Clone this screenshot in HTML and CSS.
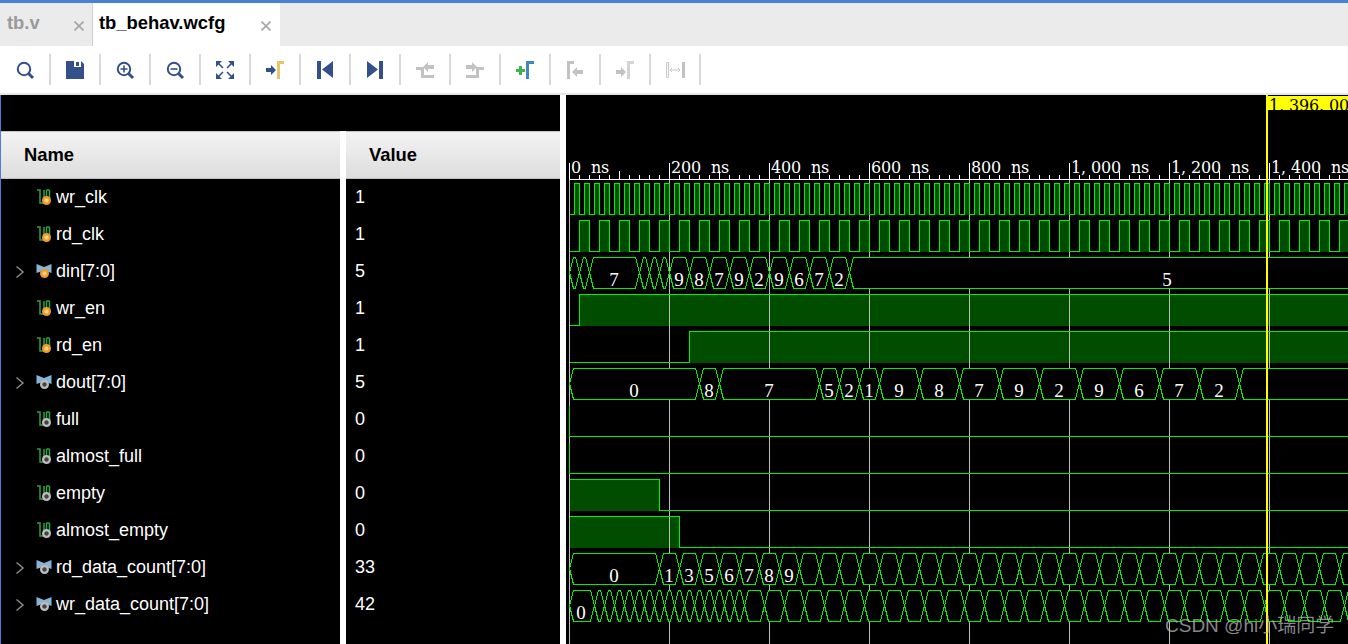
FILE: index.html
```html
<!DOCTYPE html>
<html lang="en">
<head>
<meta charset="utf-8">
<title>tb_behav.wcfg</title>
<link rel="stylesheet" href="styles.css">
</head>
<body>
<svg class="defs" width="0" height="0" aria-hidden="true">
  <defs>
    <symbol id="sig" viewBox="0 0 16 16">
      <path d="M1 1H4V14H8V1M10.5 1V11M13.5 1V11M10.5 1H13.5" fill="none" stroke="#2fa044" stroke-width="1.5"/>
    </symbol>
    <symbol id="bus" viewBox="0 0 16 16">
      <path d="M0.5 1 L8 4 L15.5 1 V10 L8 7.5 L0.5 10Z" fill="#86b3d6"/>
    </symbol>
  </defs>
</svg>

<header class="tabs">
  <div class="tab tab-off">
    <span class="tab-label">tb.v</span>
    <svg class="x" viewBox="0 0 10 10"><path d="M0.5 0.5L9.5 9.5M9.5 0.5L0.5 9.5"/></svg>
  </div>
  <div class="tab tab-on">
    <span class="tab-label">tb_behav.wcfg</span>
    <svg class="x" viewBox="0 0 10 10"><path d="M0.5 0.5L9.5 9.5M9.5 0.5L0.5 9.5"/></svg>
  </div>
</header>

<nav class="toolbar">
  <div class="tool"><svg class="ico" viewBox="0 0 20 20"><circle class="ring" cx="9" cy="9" r="6.2"/><path class="handle" d="M13.5 13.5L18 18"/></svg></div>
  <div class="tool"><svg class="ico" viewBox="0 0 20 20"><path class="navy" d="M1 1H16L19 4V19H1Z"/><rect x="9" y="1" width="7" height="6" fill="#fff"/><rect x="11" y="2" width="3" height="4" class="navy"/></svg></div>
  <div class="tool"><svg class="ico" viewBox="0 0 20 20"><circle class="ring" cx="9" cy="9" r="6.2"/><path class="handle" d="M13.5 13.5L18 18"/><path class="thin" d="M5.5 9H12.5M9 5.5V12.5"/></svg></div>
  <div class="tool"><svg class="ico" viewBox="0 0 20 20"><circle class="ring" cx="9" cy="9" r="6.2"/><path class="handle" d="M13.5 13.5L18 18"/><path class="thin" d="M5.5 9H12.5"/></svg></div>
  <div class="tool"><svg class="ico" viewBox="0 0 20 20"><path class="navy" d="M1 1H7L1 7ZM19 1V7L13 1ZM1 19V13L7 19ZM19 19H13L19 13Z"/><path class="thin" d="M3 3L8 8M17 3L12 8M3 17L8 12M17 17L12 12"/></svg></div>
  <div class="tool"><svg class="ico" viewBox="0 0 20 20"><path class="navy" d="M1 8H6V5L11 10L6 15V12H1Z"/><path fill="#e3c76b" d="M12 1H19V4H15V19H12Z"/></svg></div>
  <div class="tool"><svg class="ico" viewBox="0 0 20 20"><rect class="navy" x="2" y="1" width="4" height="18"/><path class="navy" d="M18 1V18L7 9.5Z"/></svg></div>
  <div class="tool"><svg class="ico" viewBox="0 0 20 20"><path class="navy" d="M2 1V18L13 9.5Z"/><rect class="navy" x="14" y="1" width="4" height="18"/></svg></div>
  <div class="tool"><svg class="ico" viewBox="0 0 20 20"><path class="mute" d="M1 7H9V15H19V18H6V10H1Z"/><path class="mute" d="M8 7L13 2V5H19V9H13V12Z"/></svg></div>
  <div class="tool"><svg class="ico" viewBox="0 0 20 20"><path class="mute" d="M1 5H7V2L12 7L7 12V9H1Z"/><path class="mute" d="M19 7V10H14V18H1V15H11V7Z"/></svg></div>
  <div class="tool"><svg class="ico" viewBox="0 0 20 20"><path fill="#3cb54a" d="M4 6H7V9H10V12H7V15H4V12H1V9H4Z"/><path fill="#3f87bd" d="M11 1H19V4H14V19H11Z"/></svg></div>
  <div class="tool"><svg class="ico" viewBox="0 0 20 20"><path class="mute" d="M2 1H9V4H5V19H2Z"/><path class="mute" d="M7 12L12 7V10H18V14H12V17Z"/></svg></div>
  <div class="tool"><svg class="ico" viewBox="0 0 20 20"><path class="mute" d="M1 10H6V7L11 12L6 17V14H1Z"/><path class="mute-lt" d="M12 1H19V4H15V19H12Z"/></svg></div>
  <div class="tool"><svg class="ico" viewBox="0 0 20 20"><path fill="none" stroke="#c9c9c9" stroke-width="1" d="M1.5 2.5H3.5V17.5H1.5Z"/><rect class="mute" x="17" y="2" width="3" height="16"/><path d="M5 10H15M7 8L5 10L7 12M13 8L15 10L13 12" fill="none" stroke="#c9c9c9" stroke-width="1"/></svg></div>
</nav>

<div class="strip"></div>

<main class="main">
  <section class="signals">
    <div class="signals-top"></div>
    <div class="cols">
      <div class="col-name">
        <div class="head">Name</div>
        <div class="row"><span class="chev-none"></span><span class="sig"><svg><use href="#sig"/></svg><i class="dot dot-in"></i></span>wr_clk</div>
        <div class="row"><span class="chev-none"></span><span class="sig"><svg><use href="#sig"/></svg><i class="dot dot-in"></i></span>rd_clk</div>
        <div class="row"><svg class="chev" viewBox="0 0 10 14"><path d="M1.5 1.5L8 7L1.5 12.5"/></svg><span class="sig"><svg><use href="#bus"/></svg><i class="dot dot-in dot-bus"></i></span>din[7:0]</div>
        <div class="row"><span class="chev-none"></span><span class="sig"><svg><use href="#sig"/></svg><i class="dot dot-in"></i></span>wr_en</div>
        <div class="row"><span class="chev-none"></span><span class="sig"><svg><use href="#sig"/></svg><i class="dot dot-in"></i></span>rd_en</div>
        <div class="row"><svg class="chev" viewBox="0 0 10 14"><path d="M1.5 1.5L8 7L1.5 12.5"/></svg><span class="sig"><svg><use href="#bus"/></svg><i class="dot dot-out dot-bus"></i></span>dout[7:0]</div>
        <div class="row"><span class="chev-none"></span><span class="sig"><svg><use href="#sig"/></svg><i class="dot dot-out"></i></span>full</div>
        <div class="row"><span class="chev-none"></span><span class="sig"><svg><use href="#sig"/></svg><i class="dot dot-out"></i></span>almost_full</div>
        <div class="row"><span class="chev-none"></span><span class="sig"><svg><use href="#sig"/></svg><i class="dot dot-out"></i></span>empty</div>
        <div class="row"><span class="chev-none"></span><span class="sig"><svg><use href="#sig"/></svg><i class="dot dot-out"></i></span>almost_empty</div>
        <div class="row"><svg class="chev" viewBox="0 0 10 14"><path d="M1.5 1.5L8 7L1.5 12.5"/></svg><span class="sig"><svg><use href="#bus"/></svg><i class="dot dot-out dot-bus"></i></span>rd_data_count[7:0]</div>
        <div class="row"><svg class="chev" viewBox="0 0 10 14"><path d="M1.5 1.5L8 7L1.5 12.5"/></svg><span class="sig"><svg><use href="#bus"/></svg><i class="dot dot-out dot-bus"></i></span>wr_data_count[7:0]</div>
      </div>
      <div class="col-value">
        <div class="head">Value</div>
        <div class="row">1</div>
        <div class="row">1</div>
        <div class="row">5</div>
        <div class="row">1</div>
        <div class="row">1</div>
        <div class="row">5</div>
        <div class="row">0</div>
        <div class="row">0</div>
        <div class="row">0</div>
        <div class="row">0</div>
        <div class="row">33</div>
        <div class="row">42</div>
      </div>
    </div>
  </section>
  <section class="wave">
    <svg id="wave" class="wave-svg" viewBox="566 95 782 549" width="782" height="549"></svg>
    <div class="watermark">CSDN @hi小瑞同学</div>
  </section>
</main>
<script src="script.js"></script>
</body>
</html>
```

FILE: styles.css
```css
* { box-sizing: border-box; }
html, body { margin: 0; padding: 0; }
body {
  width: 1348px;
  height: 644px;
  overflow: hidden;
  background: #fff;
  font-family: "Liberation Sans", Arial, sans-serif;
}
.defs { position: absolute; }

.tabs {
  display: flex;
  height: 46px;
  background: #ebebeb;
  border-top: 3px solid #4a80d2;
}
.tab {
  display: flex;
  align-items: center;
  justify-content: space-between;
  height: 43px;
  padding-bottom: 3px;
  font-size: 18.4px;
  font-weight: 700;
}
.tab-off {
  width: 93px;
  padding-left: 7px;
  padding-right: 8px;
  color: #9a9a9a;
  border-right: 1px solid #cfcfcf;
}
.tab-on {
  width: 187px;
  padding-left: 6px;
  padding-right: 9px;
  background: #fff;
  color: #000;
}
.x { width: 10px; height: 10px; margin-top: 5px; }
.x path { fill: none; stroke: #a4a4a4; stroke-width: 1.6; }

.toolbar {
  display: flex;
  align-items: center;
  height: 47px;
  padding-left: 1px;
  background: #fff;
}
.tool {
  display: flex;
  align-items: center;
  justify-content: center;
  width: 50px;
  height: 31px;
  border-right: 2px solid #d9d9d9;
}
.ico { width: 20px; height: 20px; }
.ring { fill: none; stroke: #33508a; stroke-width: 2; }
.handle { fill: none; stroke: #33508a; stroke-width: 3; }
.thin { fill: none; stroke: #33508a; stroke-width: 1.6; }
.navy { fill: #33508a; }
.mute { fill: #c2c2c2; }
.mute-lt { fill: #d4d4d4; }

.strip { height: 2px; background: #e8e8e8; }

.main {
  display: flex;
  gap: 6px;
  height: 549px;
  background: #fff;
}
.signals {
  display: flex;
  flex-direction: column;
  width: 560px;
  border-left: 1px solid #4a80d2;
}
.signals-top { height: 36px; background: #000; }
.cols { display: flex; gap: 6px; flex: 1; }
.col-name { width: 339px; background: #000; }
.col-value { width: 214px; background: #000; }
.head {
  display: flex;
  align-items: center;
  height: 48px;
  padding-left: 23px;
  font-size: 18.4px;
  font-weight: 700;
  color: #000;
  background: linear-gradient(#f3f3f3, #dddddd);
  border-top: 1px solid #c4c4c4;
  border-bottom: 1px solid #bdbdbd;
}
.row {
  display: flex;
  align-items: center;
  height: 37px;
  font-size: 18px;
  color: #fff;
  white-space: nowrap;
}
.col-name .row { padding-left: 14px; }
.col-value .row { padding-left: 9px; }
.chev { width: 10px; height: 14px; flex: none; }
.chev path { fill: none; stroke: #8a8a8a; stroke-width: 1.5; }
.chev-none { width: 10px; flex: none; }
.sig {
  position: relative;
  display: block;
  flex: none;
  align-self: flex-start;
  width: 16px;
  height: 16px;
  margin-top: 10px;
  margin-left: 11px;
  margin-right: 4px;
}
.sig svg { display: block; width: 16px; height: 16px; }
.dot {
  position: absolute;
  left: 6px;
  top: 7px;
  width: 9px;
  height: 9px;
  border-radius: 50%;
}
.dot-bus { left: 4px; top: 6px; }
.dot-in { background: radial-gradient(circle, #ffd28a 0 22%, #f29a26 40%); }
.dot-out { background: radial-gradient(circle, #444 0 28%, #bdbdbd 40%); }

.wave { position: relative; width: 782px; height: 549px; background: #000; }
.wave-svg { display: block; }
.tick { stroke: #fff; stroke-width: 1; shape-rendering: crispEdges; }
.grid { stroke: #bdbdbd; stroke-width: 1; shape-rendering: crispEdges; }
.sigline { fill: none; stroke: #00f000; stroke-width: 1; shape-rendering: crispEdges; }
.busline { fill: #000; stroke: #00f000; stroke-width: 1; shape-rendering: crispEdges; }
.hi { fill: #004d00; shape-rendering: crispEdges; }
.axis { font: 16px "DejaVu Serif", serif; fill: #fff; }
.lab { font: 19px "Liberation Serif", serif; fill: #fff; text-anchor: middle; }
.flagtxt { font: 16px "DejaVu Serif", serif; fill: #000; }
.flag { fill: #ffff00; }
.cursor { fill: #ffff00; shape-rendering: crispEdges; }
.watermark {
  position: absolute;
  left: 599px;
  top: 515px;
  font: 19px "Liberation Sans", "Noto Sans CJK SC", sans-serif;
  color: rgba(190, 190, 190, 0.72);
  white-space: nowrap;
}
```

FILE: script.js
```js
(function () {
  var svg = document.getElementById('wave');
  var END = 1350, X0 = 569;
  var fills = '', grid = '', buses = '', lines = '', text = '';

  function range(a, b, step) {
    var r = [];
    for (var x = a; x < b; x += step) r.push(x);
    return r;
  }

  function digital(top, edges, startHigh) {
    var bot = top + 31, high = !!startHigh, d, last = X0;
    d = 'M' + (X0 + 0.5) + ' ' + ((high ? top : bot) + 0.5);
    edges.concat([END]).forEach(function (x) {
      if (high) fills += '<rect class="hi" x="' + last + '" y="' + top + '" width="' + (x - last) + '" height="32"/>';
      d += 'H' + (x + 0.5);
      if (x !== END) {
        high = !high;
        d += 'V' + ((high ? top : bot) + 0.5);
      }
      last = x;
    });
    lines += '<path class="sigline" d="' + d + '"/>';
  }

  function bus(top, edges, labels) {
    var bot = top + 31, mid = top + 15.5, t = top + 0.5, b = bot + 0.5, s = 4;
    for (var i = 0; i < edges.length - 1; i++) {
      var a = edges[i] + 0.5, z = edges[i + 1] + 0.5;
      buses += '<path class="busline" d="M' + a + ' ' + mid + 'L' + (a + s) + ' ' + t + 'H' + (z - s) + 'L' + z + ' ' + mid + 'L' + (z - s) + ' ' + b + 'H' + (a + s) + 'Z"/>';
    }
    labels.forEach(function (l) {
      text += '<text class="lab" x="' + l[0] + '" y="' + (bot - 2.5) + '">' + l[1] + '</text>';
    });
  }

  function spaced(cls, x, y, s) {
    var xs = [];
    for (var i = 0; i < s.length; i++) xs.push(x + i * 10);
    return '<text class="' + cls + '" x="' + xs.join(' ') + '" y="' + y + '" xml:space="preserve">' + s + '</text>';
  }

  /* time axis */
  var axis = '<line class="tick" x1="569" x2="1348" y1="179.5" y2="179.5"/>';
  range(569, END, 10).forEach(function (x) {
    var n = x - 569, y1 = 175;
    if (n % 50 === 0) y1 = 171;
    if (n % 100 === 0) y1 = 163;
    axis += '<line class="tick" x1="' + (x + 0.5) + '" x2="' + (x + 0.5) + '" y1="' + y1 + '" y2="179"/>';
  });
  ['0 ns', '200 ns', '400 ns', '600 ns', '800 ns', '1,000 ns', '1,200 ns', '1,400 ns'].forEach(function (s, i) {
    text += spaced('axis', 571 + i * 100, 173, s);
  });

  /* grid */
  range(569, END, 100).forEach(function (x) {
    grid += '<line class="grid" x1="' + (x + 0.5) + '" x2="' + (x + 0.5) + '" y1="180" y2="644"/>';
  });

  /* wr_clk, rd_clk */
  digital(183, range(574, END, 5));
  digital(220, range(579, END, 10));

  /* din */
  var din = [569, 579, 589, 639, 649, 659, 669].concat(range(689, 850, 20)).concat([1500]);
  bus(257, din, [[614, '7'], [679, '9'], [699, '8'], [719, '7'], [739, '9'], [759, '2'], [779, '9'], [799, '6'], [819, '7'], [839, '2'], [1167, '5']]);

  /* wr_en, rd_en */
  digital(294, [579]);
  digital(331, [689]);

  /* dout */
  bus(368, [569, 699, 719, 819, 839, 859, 879, 919, 959, 999, 1039, 1079, 1119, 1159, 1199, 1239, 1500], [
    [634, '0'], [709, '8'], [769, '7'], [829, '5'], [849, '2'], [869, '1'], [899, '9'], [939, '8'],
    [979, '7'], [1019, '9'], [1059, '2'], [1099, '9'], [1139, '6'], [1179, '7'], [1219, '2']
  ]);

  /* flags */
  digital(405, [X0, X0]);
  digital(442, [X0, X0]);
  digital(479, [659], true);
  digital(516, [679], true);

  /* counters */
  bus(553, [569].concat(range(659, 1380, 20)), [[614, '0'], [669, '1'], [689, '3'], [709, '5'], [729, '6'], [749, '7'], [769, '8'], [789, '9']]);
  bus(590, [569].concat(range(594, 744, 10)).concat(range(744, 1380, 20)), [[581, '0']]);

  var cursor = '<rect class="cursor" x="1266" y="95" width="2" height="549"/>' +
    '<svg x="1268" y="96" width="80" height="14">' +
    '<rect class="flag" width="80" height="14"/>' +
    spaced('flagtxt', 1, 15, '1,396.00') + '</svg>';

  svg.innerHTML = fills + grid + axis + buses + lines + text + cursor;
})();
```
